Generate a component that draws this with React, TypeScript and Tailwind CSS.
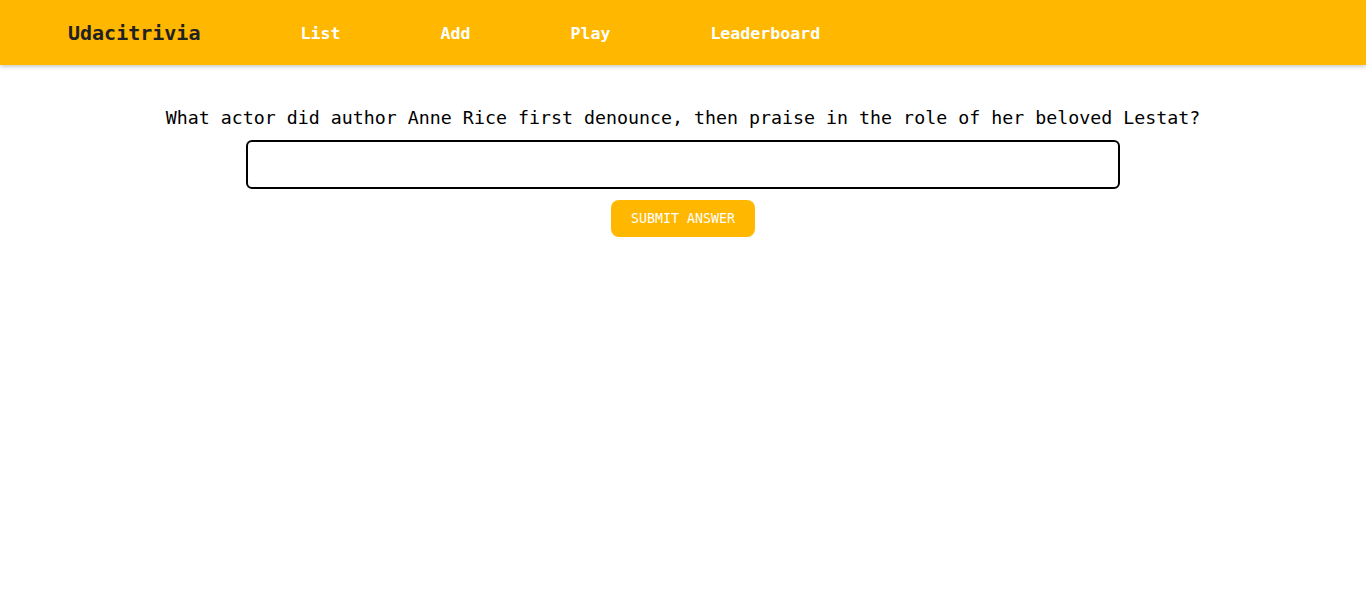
import { FC } from 'react';

const mono = { fontFamily: '"DejaVu Sans Mono", "Liberation Mono", monospace' };

const links = ['List', 'Add', 'Play', 'Leaderboard'];

const Header: FC = () => (
  <div className="h-[65px] bg-[#ffb700] shadow-[0_2px_4px_rgba(0,0,0,0.2)] flex items-center pl-[68px] gap-[100px] relative z-10">
    <div className="text-[20px] font-bold text-[#222] leading-none">Udacitrivia</div>
    {links.map((l) => (
      <div key={l} className="text-[16.6px] font-bold text-white leading-none mt-[3px]">
        {l}
      </div>
    ))}
  </div>
);

export default function App() {
  return (
    <div className="min-h-[614px] bg-white" style={mono}>
      <Header />
      <div className="flex flex-col items-center pt-[41px]">
        <div className="text-[18.3px] text-black leading-[24px]">
          What actor did author Anne Rice first denounce, then praise in the role of her beloved Lestat?
        </div>
        <input
          type="text"
          className="mt-[10px] w-[874px] h-[49px] border-2 border-black rounded-[6px] px-3 outline-none"
        />
        <button className="mt-[11px] w-[144px] h-[37px] rounded-[8px] bg-[#ffb700] text-white text-[13.3px] leading-none">
          SUBMIT ANSWER
        </button>
      </div>
    </div>
  );
}
